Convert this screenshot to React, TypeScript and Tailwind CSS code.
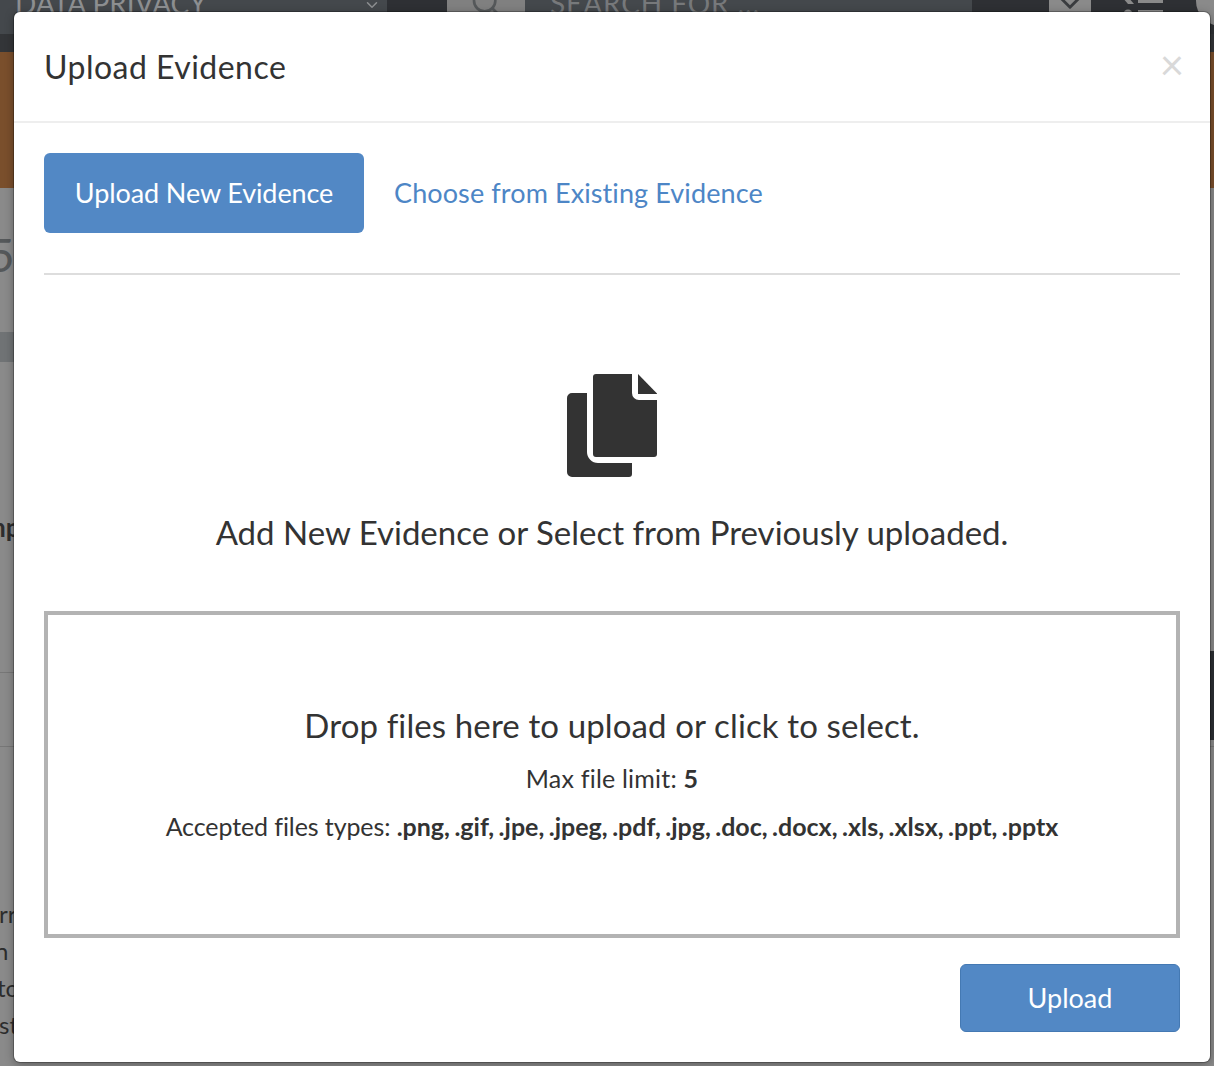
import { Search, ChevronDown } from "lucide-react";

const fileTypes = ".png, .gif, .jpe, .jpeg, .pdf, .jpg, .doc, .docx, .xls, .xlsx, .ppt, .pptx";

function FilesIcon() {
  return (
    <svg width="90" height="103" viewBox="0 0 90 103" className="text-[#333333]" fill="currentColor">
      <path d="M29 0H65V19a7 7 0 0 0 7 7H90V80a3 3 0 0 1-3 3H29a3 3 0 0 1-3-3V3a3 3 0 0 1 3-3z" />
      <path d="M71 0L90 19.500V20H71z" />
      <path d="M5 19H20V78a11 11 0 0 0 11 11H65V100a3 3 0 0 1-3 3H5a5 5 0 0 1-5-5V24a5 5 0 0 1 5-5z" />
    </svg>
  );
}

function ListIcon() {
  return (
    <svg width="42" height="34" viewBox="0 0 42 34" className="shrink-0 text-[#8a8a8a]" fill="currentColor">
      <path d="M6 -3l6 7-6 0-6-7z" />
      <circle cx="6" cy="14" r="4.500" />
      <rect x="16" y="-2" width="25" height="5" />
      <rect x="16" y="10" width="25" height="5" />
    </svg>
  );
}

export default function App() {
  return (
    <div className="relative h-[1066px] w-[1214px] overflow-hidden bg-[#8a8a8a] font-['Lato',sans-serif] text-[#333333]">
      {/* dimmed page behind the modal */}
      <div className="flex h-[34px] items-start bg-[#2e3034] text-[#8d8f91]">
        <div className="flex h-[34px] w-[387px] shrink-0 items-start justify-between bg-[#44484c] pl-[15px] pr-[6px] text-[28px] leading-[10px]">
          <span className="-mt-[2px]">DATA PRIVACY</span>
          <ChevronDown size={18} className="-mt-[4px]" />
        </div>
        <div className="ml-[60px] flex h-[34px] w-[78px] shrink-0 justify-center bg-[#808080] text-[#55585a]">
          <Search size={32} className="-mt-[14px]" />
        </div>
        <div className="flex h-[34px] w-[447px] shrink-0 bg-[#44484c] pl-[25px] text-[28px] leading-[10px] tracking-[0.9px] text-[#77797b]">
          <span className="-mt-[2px]">SEARCH FOR ...</span>
        </div>
        <div className="ml-[77px] flex h-[34px] w-[42px] shrink-0 justify-center bg-[#8a8a8a] text-[#3a3c3f]">
          <ChevronDown size={34} className="-mt-[14px]" />
        </div>
        <div className="ml-[31px] shrink-0">
          <ListIcon />
        </div>
        <div className="mt-[-24px] ml-[32px] h-[50px] w-[50px] shrink-0 rounded-full bg-[#8a8a8a]" />
      </div>
      <div className="h-[18px] bg-[#333538]" />
      <div className="h-[136px] bg-[#7a4f2c]" />
      <div className="mt-[144px] h-[30px] w-[14px] bg-[#707375]" />
      <div className="mt-[310px] h-px bg-[#777777]" />
      <div className="mt-[73px] h-px bg-[#777777]" />

      {/* bits of page text that stick out at the left */}
      <span className="absolute top-[230px] left-[-12px] text-[46px] leading-[50px] text-[#55585a]">5</span>
      <span className="absolute top-[512px] left-[-16px] text-[26px] leading-[30px] font-bold text-[#2d2d2d]">mp</span>
      <div className="absolute top-[895px] left-0 flex flex-col text-[24px] leading-[37px] text-[#2d2d2d]">
        <span className="-ml-[1px]">rr</span>
        <span className="-ml-[5px]">n</span>
        <span className="-ml-[3px]">to</span>
        <span className="-ml-[1px]">st</span>
      </div>
      <div className="absolute top-[651px] right-0 h-[89px] w-[4px] bg-[#2c2f33]" />

      <div className="absolute top-[12px] left-[14px] flex h-[1050px] w-[1196px] flex-col rounded-[6px] bg-white shadow-[0_0_0_1px_rgba(0,0,0,0.25),0_2px_10px_rgba(0,0,0,0.35)]">
        <div className="relative h-[111px] shrink-0 border-b-2 border-[#eeeeee] pt-[33px] pl-[30px] text-[32px] leading-[44px]">
          <h4 className="tracking-[0.47px]">Upload Evidence</h4>
          <span className="absolute top-[28px] right-[26px] text-[42px] leading-[48px] font-normal text-[#d9d9d9]">×</span>
        </div>

        <div className="flex flex-1 flex-col px-[30px]">
          <div className="flex items-center gap-[30px] border-b-2 border-[#dddddd] pt-[30px] pb-[40px] text-[27px]">
            <button className="h-[80px] w-[320px] rounded-[6px] bg-[#5288c5] tracking-[-0.1px] text-white">Upload New Evidence</button>
            <a className="tracking-[0.1px] text-[#4d86c6]">Choose from Existing Evidence</a>
          </div>

          <div className="flex flex-col items-center pt-[99px]">
            <FilesIcon />
            <p className="mt-[31px] text-[33px] leading-[48px]">Add New Evidence or Select from Previously uploaded.</p>
          </div>

          <div className="mt-[55px] flex h-[327px] flex-col items-center border-[4px] border-[#b3b3b3] pt-[88px]">
            <p className="text-[33px] leading-[44px] tracking-[0.12px]">Drop files here to upload or click to select.</p>
            <p className="mt-[13px] text-[25px] leading-[36px] tracking-[0.2px]">
              Max file limit: <b>5</b>
            </p>
            <p className="mt-[12px] text-[25px] leading-[36px] tracking-[-0.1px]">
              Accepted files types: <b className="tracking-normal [word-spacing:-1.6px]">{fileTypes}</b>
            </p>
          </div>

          <div className="mt-[26px] flex justify-end">
            <button className="h-[68px] w-[220px] rounded-[6px] border border-[#4479b3] bg-[#5288c5] text-[27px] text-white">Upload</button>
          </div>
        </div>
      </div>
    </div>
  );
}
